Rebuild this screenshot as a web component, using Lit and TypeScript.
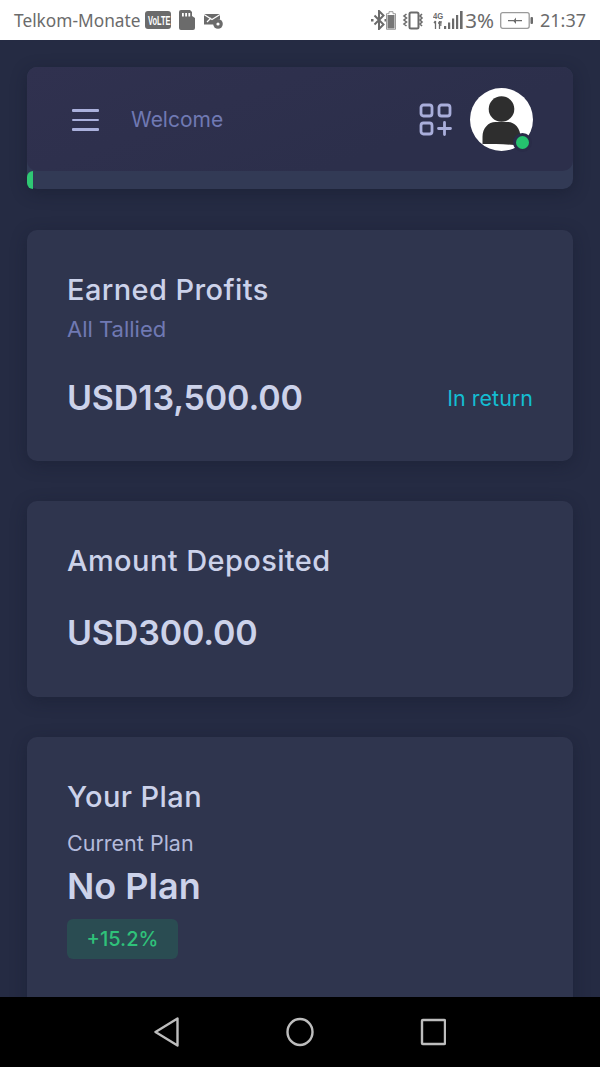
import { LitElement, html, css } from "lit";
import { customElement } from "lit/decorators.js";

@customElement("app-root")
export class AppRoot extends LitElement {
  static styles = css`
    :host { display: flex; flex-direction: column; width: 600px; height: 1067px; overflow: hidden; font-family: Inter, "Liberation Sans", sans-serif; background: #262c45; }
    .status { height: 40px; flex: none; background: #fff; display: flex; align-items: center; justify-content: space-between; padding: 0 14px; color: #6b6b6b; font-family: "Noto Sans", sans-serif; font-size: 17.3px; box-sizing: border-box; }
    .st-left, .st-right { display: flex; align-items: center; }
    .st-left svg, .st-right svg { display: block; flex: none; }
    .carrier { margin-right: 4px; }
    .volte { margin-right: 8px; }
    .sd { margin-right: 9px; }
    .bt { margin-right: -1px; }
    .bat { margin-right: 6px; }
    .vib { margin-right: 7px; }
    .net { margin-right: 2px; }
    .pct { margin-right: 6px; font-size: 20.5px; }
    .chg { margin-right: 7px; }
    .time { font-size: 18px; }
    .main { flex: 1; min-height: 0; overflow: hidden; padding: 27px 27px 0; box-sizing: border-box; display: flex; flex-direction: column; gap: 40px; background: #252b43; }
    .head-wrap { flex: none; height: 122px; margin-bottom: 1px; position: relative; background: #323a55; border-radius: 10px; box-shadow: 0 4px 16px rgba(18,22,40,.4); }
    .head { height: 104px; box-sizing: border-box; background: linear-gradient(160deg, #30314f, #2c2f4b 70%); border-radius: 10px; display: flex; align-items: center; padding: 0 40px 0 45px; }
    .menu { display: flex; flex-direction: column; gap: 7px; width: 27px; margin: 2px 32px 0 0; }
    .menu i { display: block; height: 2.7px; background: #aab0dc; border-radius: 1px; }
    .welcome { color: #7079b3; font-size: 21px; flex: 1; }
    .apps { margin-right: 18px; display: block; }
    .avatar { width: 63px; height: 63px; position: relative; }
    .avatar svg { display: block; }
    .dot { position: absolute; right: 1px; bottom: -1px; width: 13px; height: 13px; border-radius: 50%; background: #25c26e; border: 3px solid #2a2c48; }
    .prog { position: absolute; left: 0; top: 104px; width: 6px; height: 18px; background: #2fc874; border-radius: 9px 0 0 9px; }
    .card { flex: none; box-sizing: border-box; background: #2f354e; border-radius: 10px; padding: 0 40px; box-shadow: 0 4px 16px rgba(18,22,40,.35); }
    .c1 { height: 231px; padding-top: 42px; }
    .c2 { height: 196px; padding-top: 42px; }
    .c3 { height: 290px; padding-top: 42px; }
    h2 { margin: 0; font-size: 29px; line-height: 36px; font-weight: 500; color: #ccd2ea; letter-spacing: .4px; }
    .sub { color: #7079b3; font-size: 22px; line-height: 28px; margin-top: 7px; }
    .row { display: flex; justify-content: space-between; align-items: center; margin-top: 33px; }
    .amt { font-size: 34px; line-height: 44px; font-weight: 600; color: #ccd2ea; letter-spacing: -.15px; }
    .ret { color: #14bdd2; font-size: 21.5px; }
    .c2 .amt { margin-top: 32px; }
    .cur { color: #b4bbdc; font-size: 21.5px; line-height: 26px; margin-top: 15px; }
    .plan { font-size: 36px; line-height: 44px; font-weight: 600; color: #ccd2ea; margin-top: 8px; }
    .badge { display: inline-block; margin-top: 11px; width: 111px; height: 40px; line-height: 40px; text-align: center; background: #2a4c52; color: #2fc27a; border-radius: 6px; font-size: 20px; font-weight: 500; }
    .nav { flex: none; height: 70px; background: #000; display: flex; align-items: center; justify-content: center; }
    .nav svg { display: block; }
    .vl { font: 700 12px "Liberation Sans", sans-serif; fill: #fff; }
    .fg { font: 700 9px "Liberation Sans", sans-serif; fill: #6b6b6b; }
  `;

  render() {
    return html`
      <div class="status">
        <div class="st-left">
          <span class="carrier">Telkom-Monate</span>
          <svg class="volte" width="26" height="18" viewBox="0 0 26 18"><rect width="26" height="18" rx="3" fill="#6b6b6b"/><text class="vl" transform="translate(3 13.500) scale(.62 1)">VoLTE</text></svg>
          <svg class="sd" width="16" height="20" viewBox="0 0 16 20"><path d="M2 0h9l2 2v4l3 2v10a2 2 0 0 1-2 2H2a2 2 0 0 1-2-2V2a2 2 0 0 1 2-2z" fill="#6b6b6b"/><path d="M3 3h1.800v3.500H3zM6.200 3H8v3.500H6.200zM9.400 3h1.800v3.500H9.400z" fill="#fff"/></svg>
          <svg width="19" height="17" viewBox="0 0 19 17"><path d="M0 2h16v5.500a5 5 0 0 0-5.500 5H0z" fill="#6b6b6b"/><path d="M0 2.500l8 5 8-5M3 10l4-4M13 7.500" fill="none" stroke="#fff" stroke-width="1.200"/><circle cx="14" cy="12" r="4.800" fill="#6b6b6b"/><circle cx="14" cy="12" r="1.600" fill="#fff"/></svg>
        </div>
        <div class="st-right">
          <svg class="bt" width="16" height="20" viewBox="0 0 16 20"><path d="M3.500 5.500l9 9-4.500 4.500V1l4.500 4.500-9 9" fill="none" stroke="#6b6b6b" stroke-width="2"/><path d="M0 9h2.500v2.500H0zM13.500 9H16v2.500h-2.500z" fill="#6b6b6b"/></svg>
          <svg class="bat" width="10" height="19" viewBox="0 0 10 19"><path d="M3 .7h4v2h2.500v15.600H.5V2.700H3z" fill="none" stroke="#9a9a9a" stroke-width="1"/><rect x="1.500" y="4" width="7" height="13.500" fill="#777"/></svg>
          <svg class="vib" width="24" height="19" viewBox="0 0 24 19"><rect x="7.500" y="1.500" width="9" height="16" rx="1.500" fill="none" stroke="#6b6b6b" stroke-width="2"/><path d="M4.500 3L2 5l2.500 2L2 9l2.500 2L2 13l2.500 2M20 3l-2 2 2 2-2 2 2 2-2 2 2 2" fill="none" stroke="#6b6b6b" stroke-width="1.600"/></svg>
          <svg class="net" width="30" height="21" viewBox="0 0 30 21"><text class="fg" transform="translate(0 8.500) scale(.85 1)">4G</text><path d="M2.500 11v8M1 13l1.500-2M5 13h3v-2M6.500 11v8M6.500 15h2" stroke="#6b6b6b" stroke-width="1.300" fill="none"/><path d="M11 16h2.200v3H11zM15 12.500h2.200V19H15zM19 8.500h2.200V19H19zM23 5h2.200v14H23zM27 1h2.600v18H27z" fill="#6b6b6b"/></svg>
          <span class="pct">3%</span>
          <svg class="chg" width="33" height="17" viewBox="0 0 33 17"><rect x=".7" y=".7" width="28.500" height="15.600" rx="2" fill="none" stroke="#9a9a9a" stroke-width="1.300"/><rect x="30.500" y="5" width="2.500" height="7" rx="1" fill="#6b6b6b"/><path d="M8 8h6l2-2.500V8h6v1.300h-6V12l-2.500-2.700H8z" fill="#6b6b6b"/></svg>
          <span class="time">21:37</span>
        </div>
      </div>

      <div class="main">
        <div class="head-wrap">
          <div class="head">
            <div class="menu"><i></i><i></i><i></i></div>
            <div class="welcome">Welcome</div>
            <svg class="apps" width="33" height="33" viewBox="0 0 33 33" fill="none" stroke="#a9aedb" stroke-width="2.800"><rect x="2" y="2" width="11" height="11" rx="2.500"/><rect x="20" y="2" width="11" height="11" rx="2.500"/><rect x="2" y="20" width="11" height="11" rx="2.500"/><path d="M25.500 19.500v12M19.500 25.500h12" stroke-linecap="round"/></svg>
            <div class="avatar">
              <svg width="63" height="63" viewBox="0 0 63 63"><defs><clipPath id="av"><circle cx="31.500" cy="31.500" r="31.500"/></clipPath></defs><circle cx="31.500" cy="31.500" r="31.500" fill="#fff"/><g clip-path="url(#av)"><circle cx="31.500" cy="21" r="12.800" fill="#2e2e2e"/><path d="M12.500 56v-7c0-9 6-15 13-15h12c7 0 13 6 13 15v9c-12-2-26-2-38-2z" fill="#2e2e2e"/></g></svg>
              <span class="dot"></span>
            </div>
          </div>
          <div class="prog"></div>
        </div>

        <div class="card c1">
          <h2>Earned Profits</h2>
          <div class="sub">All Tallied</div>
          <div class="row"><span class="amt">USD13,500.00</span><span class="ret">In return</span></div>
        </div>

        <div class="card c2">
          <h2>Amount Deposited</h2>
          <div class="amt">USD300.00</div>
        </div>

        <div class="card c3">
          <h2>Your Plan</h2>
          <div class="cur">Current Plan</div>
          <div class="plan">No Plan</div>
          <span class="badge">+15.2%</span>
        </div>
      </div>

      <div class="nav">
        <svg width="292" height="34" viewBox="0 0 292 34" fill="none" stroke="#bdbdbd" stroke-width="2.400" stroke-linejoin="round"><path d="M23.500 3.500v27L1.500 17z"/><ellipse cx="146" cy="17" rx="12.500" ry="13"/><rect x="268" y="5" width="23" height="24" rx=".8"/></svg>
      </div>
    `;
  }
}
